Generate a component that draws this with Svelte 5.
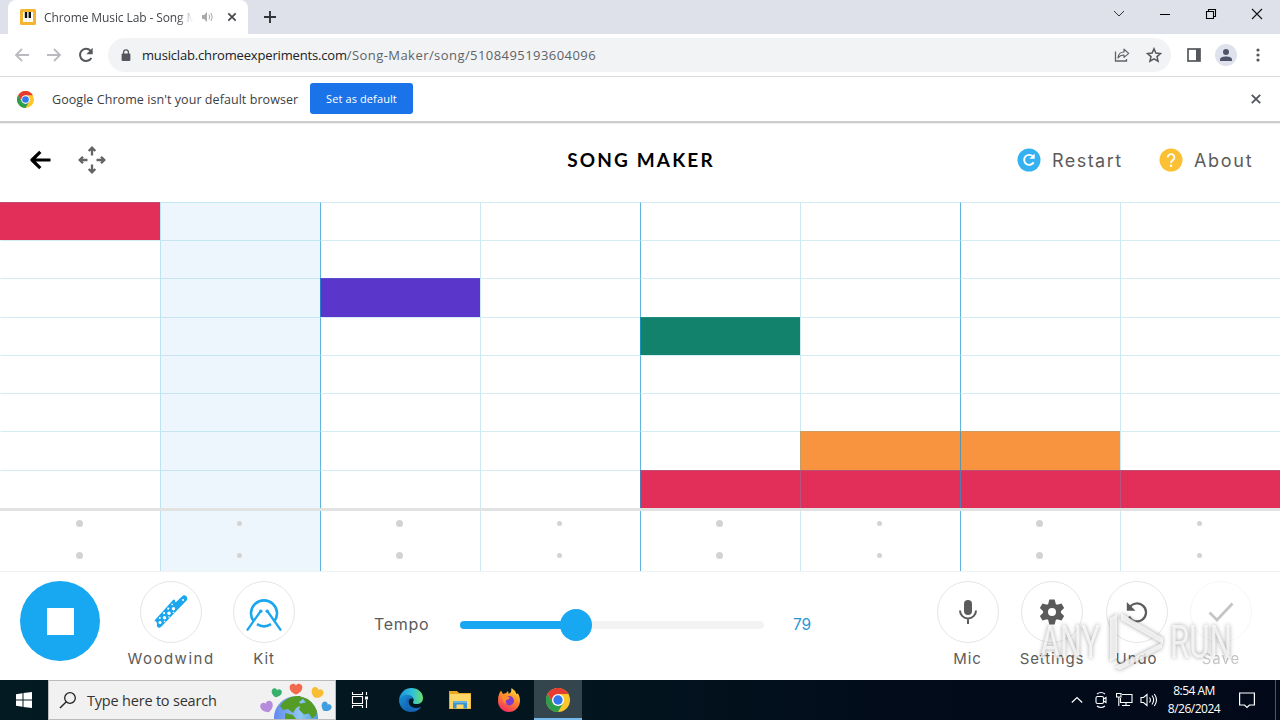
<script>
  const N = null;
  const red = '#e22f59', purple = '#5a37ca', green = '#13826c', orange = '#f8943f';
  const rows = [
    [red, N, N, N, N, N, N, N],
    [N, N, N, N, N, N, N, N],
    [N, N, purple, N, N, N, N, N],
    [N, N, N, N, green, N, N, N],
    [N, N, N, N, N, N, N, N],
    [N, N, N, N, N, N, N, N],
    [N, N, N, N, N, orange, orange, N],
    [N, N, N, N, red, red, red, red]
  ];
  const beats = [0, 1, 2, 3, 4, 5, 6, 7];
  const playing = 1;
</script>

{#snippet chromeLogo(size)}
  <svg width={size} height={size} viewBox="0 0 24 24">
    <circle cx="12" cy="12" r="12" fill="#fbc72d" />
    <path d="M1.6 6A12 12 0 0 1 22.4 6H12L6.8 15z" fill="#e53b30" />
    <path d="M1.6 6 6.8 15 12 18 17.2 15 12 24A12 12 0 0 1 1.6 6z" fill="#2b9d4c" />
    <circle cx="12" cy="12" r="6" fill="#fff" />
    <circle cx="12" cy="12" r="4.7" fill="#3079ed" />
  </svg>
{/snippet}

<div class="screen">
  <header class="tabs">
    <div class="tab">
      <svg width="16" height="16" viewBox="0 0 16 16"><rect width="16" height="16" rx="1.5" fill="#f5b52e" /><rect x="3" y="3" width="10" height="10" fill="#fff" /><path d="M4.800 3h2.400v6H4.800zM8.600 3H11v6H8.600z" fill="#111" /><path d="M6 9v4M9.800 9v4" stroke="#e8e0d0" stroke-width=".6" /></svg>
      <span class="tabtitle">Chrome Music Lab - Song M</span>
      <svg class="sound" width="12" height="12" viewBox="0 0 12 12"><path d="M1 4h2l3-3v10L3 8H1z" fill="#aaa" /><path d="M8 3.5q1.5 2.5 0 5M10 2q2.5 4 0 8" fill="none" stroke="#aaa" /></svg>
      <svg class="tabx" width="10" height="10" viewBox="0 0 10 10"><path d="m1.3 1.3 7.4 7.4m0-7.4L1.3 8.7" stroke="#44474b" stroke-width="1.7" /></svg>
    </div>
    <svg class="plus" width="12" height="12" viewBox="0 0 12 12"><path d="M6 0v12M0 6h12" stroke="#303338" stroke-width="1.9" /></svg>
    <div class="wincontrols">
      <svg width="12" height="12" viewBox="0 0 12 12"><path d="m1 3 5 5 5-5" fill="none" stroke="#333" /></svg>
      <svg width="12" height="12" viewBox="0 0 12 12"><path d="M1 6.5h10" stroke="#000" /></svg>
      <svg width="12" height="12" viewBox="0 0 12 12"><path d="M1.5 3.5h7v7h-7zM3.5 3.5v-2h7v7h-2" fill="none" stroke="#000" stroke-width="1.1" /></svg>
      <svg width="12" height="12" viewBox="0 0 12 12"><path d="m1 1 10 10M11 1 1 11" stroke="#111" stroke-width="1.1" /></svg>
    </div>
  </header>

  <nav class="toolbar">
    <svg width="16" height="16" viewBox="0 0 16 16"><path d="M15 8H2M8 2 2 8l6 6" fill="none" stroke="#b9bbbe" stroke-width="1.8" /></svg>
    <svg width="16" height="16" viewBox="0 0 16 16"><path d="M1 8h13M8 2l6 6-6 6" fill="none" stroke="#b9bbbe" stroke-width="1.8" /></svg>
    <svg width="16" height="16" viewBox="0 0 16 16"><path d="M13.4 11A6.1 6.1 0 1 1 12.5 3.6" fill="none" stroke="#54575c" stroke-width="2" /><path d="M14.7.8v6.4H8.3z" fill="#54575c" /></svg>
    <div class="omni">
      <svg width="10" height="13" viewBox="0 0 10 13"><rect x=".6" y="4.4" width="8.8" height="7.6" rx="1" fill="#54575c" /><path d="M2.6 5V3.2a2.4 2.4 0 0 1 4.8 0V5" fill="none" stroke="#54575c" stroke-width="1.3" /></svg>
      <span class="url"><b>musiclab.chromeexperiments.com</b>/Song-Maker/song/5108495193604096</span>
      <svg class="share" width="16" height="16" viewBox="0 0 16 16"><path d="M1.5 4.500v9.500h11v-2" fill="none" stroke="#5f6368" stroke-width="1.3" /><path d="M4 11c.3-4 2.500-6 6-6V2.200l4.700 4.200-4.700 4V8C7.500 8 5.500 8.800 4 11z" fill="none" stroke="#5f6368" stroke-width="1.2" stroke-linejoin="round" /></svg>
      <svg width="16" height="16" viewBox="0 0 16 16"><path d="m8 1.800 1.850 4.300 4.650.4-3.500 3.100 1.050 4.600L8 11.800l-4.050 2.400L5 9.600 1.500 6.500l4.650-.4z" fill="none" stroke="#54575c" stroke-width="1.5" /></svg>
    </div>
    <svg class="panel" width="14" height="14" viewBox="0 0 14 14"><rect x="1" y="1" width="12" height="12" fill="#fff" stroke="#54575c" stroke-width="1.700" /><path d="M9 1h4v12H9z" fill="#54575c" /></svg>
    <svg class="avatar" width="22" height="22" viewBox="0 0 22 22"><circle cx="11" cy="11" r="11" fill="#dfe1ec" /><circle cx="11" cy="8" r="3" fill="#4f5369" /><path d="M5 17v-1.500C5 13.200 8.500 12.500 11 12.500s6 .7 6 3V17z" fill="#4f5369" /></svg>
    <svg class="kebab" width="4" height="14" viewBox="0 0 4 14" fill="#54575c"><circle cx="2" cy="2" r="1.600" /><circle cx="2" cy="7" r="1.600" /><circle cx="2" cy="12" r="1.600" /></svg>
  </nav>

  <div class="infobar">
    {@render chromeLogo(17)}
    <span class="infotext">Google Chrome isn't your default browser</span>
    <button class="setdefault">Set as default</button>
    <svg class="infox" width="10" height="10" viewBox="0 0 10 10"><path d="m.8.8 8.400 8.400m0-8.400L.8 9.200" stroke="#54575c" stroke-width="1.900" /></svg>
  </div>

  <div class="apphead">
    <div class="left">
      <svg width="22" height="20" viewBox="0 0 22 20"><path d="M20.500 10H2M10.300 1.800 2 10l8.300 8.200" fill="none" stroke="#000" stroke-width="3.200" stroke-linejoin="round" /></svg>
      <svg class="move" width="28" height="28" viewBox="-14 -14 28 28">
        {#each [0, 90, 180, 270] as a}
          <path d="M0-4.500v-7M-3.300-9 0-12.300 3.300-9" transform="rotate({a})" fill="none" stroke="#636363" stroke-width="2.300" />
        {/each}
      </svg>
    </div>
    <h1>SONG MAKER</h1>
    <div class="right">
      <svg width="24" height="24" viewBox="0 0 24 24"><circle cx="12" cy="12" r="11.500" fill="#35b1f2" /><path d="M16.600 14.200a5 5 0 1 1-.6-5.600" fill="none" stroke="#fff" stroke-width="1.900" /><path d="M17.700 5.500v5.300h-5.300z" fill="#fff" /></svg>
      <span class="restart">Restart</span>
      <svg width="24" height="24" viewBox="0 0 24 24"><circle cx="12" cy="12" r="11.500" fill="#fcc034" /><path d="M8.700 9.500a3.300 3.200 0 1 1 5.300 2.400c-1.300 1-2 1.500-2 3" fill="none" stroke="#fff" stroke-width="1.900" /><circle cx="12" cy="17.800" r="1.200" fill="#fff" /></svg>
      <span class="about">About</span>
    </div>
  </div>

  <main class="notes">
    {#each rows as row}
      {#each row as note, c}
        <div class="cell" class:bar={c % 2 === 0 && c > 0} class:first={c === 0} class:play={c === playing} style:background-color={note}></div>
      {/each}
    {/each}
  </main>
  <section class="drums">
    {#each beats as c}
      <div class="beat" class:bar={c % 2 === 0 && c > 0} class:first={c === 0} class:play={c === playing} class:weak={c % 2 === 1}>
        <i></i><i></i>
      </div>
    {/each}
  </section>

  <footer class="controls">
    <div class="stop"><span></span></div>
    <div class="tool wood">
      <div class="ring"><svg width="36" height="36" viewBox="0 0 36 36">
        <path d="M1.500 26.500 20 6l1.800-.5.7 3L29.500 2c2-2 6 1 4.500 4L8 33c-2 2-5 0-4-3l-.5-2z" fill="#1ba6ee" />
        <g fill="#fff"><circle cx="7" cy="28.500" r="1.500" /><circle cx="11.500" cy="23.800" r="1.700" /><circle cx="16" cy="19.200" r="1.700" /><circle cx="20.500" cy="14.700" r="1.700" /><circle cx="6.800" cy="24" r="1" /><circle cx="11" cy="19.200" r="1.100" /><circle cx="15.200" cy="14.600" r="1.100" /><circle cx="19.200" cy="10.300" r=".9" /><circle cx="11.500" cy="27.500" r=".8" /><circle cx="16" cy="23" r=".8" /><circle cx="20.500" cy="18.500" r=".8" /><circle cx="30" cy="6" r="1" /></g>
      </svg></div>
      <span>Woodwind</span>
    </div>
    <div class="tool kit">
      <div class="ring"><svg width="38" height="38" viewBox="0 0 38 38" fill="none" stroke="#1ba6ee">
        <path d="M8.500 26A13 13 0 1 1 29.500 26M12 29.200A13 13 0 0 0 26 29.200" stroke-width="2.600" /><path d="M2 35.500 15 17M36 35.500 23 17" stroke-width="2.200" /><circle cx="15.800" cy="16.200" r="1.300" fill="#1ba6ee" /><circle cx="22.200" cy="16.200" r="1.300" fill="#1ba6ee" />
      </svg></div>
      <span>Kit</span>
    </div>
    <span class="tempo">Tempo</span>
    <div class="slider"><div class="fill"></div><div class="thumb"></div></div>
    <span class="bpm">79</span>
    <div class="actions">
      <div class="tool">
        <div class="ring"><svg width="20" height="26" viewBox="0 0 20 26"><rect x="6" y="1" width="8" height="15" rx="4" fill="#5b5b5b" /><path d="M2 11.500a8 8 0 0 0 16 0M10 19.500V25" fill="none" stroke="#5b5b5b" stroke-width="2" /></svg></div>
        <span>Mic</span>
      </div>
      <div class="tool">
        <div class="ring"><svg width="26" height="26" viewBox="-13 -13 26 26"><g fill="#5b5b5b">{#each [0, 60, 120, 180, 240, 300] as a}<path d="M-4-7-2.700-12.500H2.700L4-7z" transform="rotate({a})" />{/each}</g><circle r="6.500" fill="none" stroke="#5b5b5b" stroke-width="5" /></svg></div>
        <span>Settings</span>
      </div>
      <div class="tool">
        <div class="ring"><svg width="22" height="22" viewBox="0 0 22 22"><path d="M3.500 6.500A9 9 0 1 1 3 15.500" fill="none" stroke="#5b5b5b" stroke-width="2.200" /><path d="M.8 1v8.700h8.700z" fill="#5b5b5b" /></svg></div>
        <span>Undo</span>
      </div>
      <div class="tool save">
        <div class="ring"><svg width="26" height="20" viewBox="0 0 26 20"><path d="m1.500 10.500 7.500 7.500L24.500 1.500" fill="none" stroke="#5b5b5b" stroke-width="2.800" /></svg></div>
        <span>Save</span>
      </div>
    </div>
    <svg class="mark" width="204" height="72" viewBox="0 0 204 72">
      <g fill="#fff" fill-opacity=".75">
        <text x="6" y="48" textLength="60" lengthAdjust="spacingAndGlyphs">ANY</text>
        <text x="136" y="48" textLength="62" lengthAdjust="spacingAndGlyphs">RUN</text>
        <path d="M76 52V8l7-4v44zM87 3l42 25v6L87 10zM80 57l48-24v5L86 60z" />
      </g>
    </svg>
  </footer>

  <div class="taskbar">
    <div class="start"><svg width="16" height="16" viewBox="0 0 16 16" fill="#fff"><path d="M0 2.200 6.500 1.300v6.200H0zM7.500 1.100 16 0v7.500H7.500zM0 8.500h6.500v6.200L0 13.800zM7.500 8.500H16V16l-8.500-1.100z" /></svg></div>
    <div class="search">
      <svg class="lens" width="18" height="18" viewBox="0 0 18 18"><circle cx="11" cy="7" r="5.300" fill="none" stroke="#222" stroke-width="1.300" /><path d="M7.300 10.800 1 17" stroke="#222" stroke-width="1.400" /></svg>
      <span>Type here to search</span>
      <svg class="earth" width="76" height="38" viewBox="0 0 76 38">
        <defs>
          <linearGradient id="sea"><stop offset="0" stop-color="#6289ef" /><stop offset=".6" stop-color="#8fc7f3" /><stop offset="1" stop-color="#4a9de2" /></linearGradient>
          <path id="heart" d="M0 5.500C-3 4.500-7 1.500-6.300-2.500-5.500-6-1-6 0-3.500 1-6 5.500-6 6.300-2.500 7 1.500 3 4.500 0 5.500z" />
        </defs>
        <circle cx="37" cy="37" r="22" fill="url(#sea)" />
        <path d="M24 21q7-7 17-6l3 3-4 3 3 3-6 3-3 5-5-4-5 1-3-4zM42 15.500q12 3 16 15l-1 4-4 3-3-5-5 1-5-5 2-6 5-1zM26 32l8 2 3 4H26z" fill="#559c27" />
        <use href="#heart" transform="translate(37 8)" fill="#f26a4e" />
        <use href="#heart" transform="translate(17.500 12) rotate(12) scale(.8)" fill="#36b06a" />
        <use href="#heart" transform="translate(58 12) rotate(25) scale(.96)" fill="#f7bd33" />
        <use href="#heart" transform="translate(8 26) rotate(-20)" fill="#b58bdc" />
        <use href="#heart" transform="translate(67 26) rotate(35) scale(.82)" fill="#3f9ee0" />
      </svg>
    </div>
    <div class="task"><svg width="18" height="18" viewBox="0 0 18 18" fill="none" stroke="#fff" stroke-width="1.100"><path d="M1.500 1v2.500h10V1M1.500 17v-2.500h10V17M1.500 5.500h10v7h-10zM15.500 1v3M15.500 9v8" /><path d="M14 5.500h3v3h-3z" fill="#fff" stroke="none" /></svg></div>
    <div class="task edge"><svg width="24" height="24" viewBox="0 0 24 24">
      <defs><linearGradient id="edgeA" x2="1"><stop offset="0" stop-color="#1d93dc" /><stop offset=".55" stop-color="#30c0d8" /><stop offset="1" stop-color="#6be06a" /></linearGradient><linearGradient id="edgeB" y2="1"><stop offset="0" stop-color="#1a8fd8" /><stop offset="1" stop-color="#0b4f9c" /></linearGradient></defs>
      <path d="M0 12C1 4.500 6 0 12.500 0 19 0 24 4.500 24 10c0 4-3 6-6.500 6-2.500 0-4-.8-3.500-1.800C16 11 13.500 8 9.500 8 5 8 1.500 10 0 12z" fill="url(#edgeA)" />
      <path d="M0 12C1.500 8.500 5 6.500 9 6.800c3 .2 5 2 5 4-3.500-1.300-6 2-4.500 5.700 2 4.500 8 5 12.500 2.500C19.500 22.500 16 24 12 24 5 24 0 18.500 0 12z" fill="url(#edgeB)" />
      <path d="M9 9.500C6 12 6 18 9.500 21c2 1.800 5 2.600 7.500 2 2-.8 4-2.300 5-4-4.500 2-10.500 1-12-3.500-.8-2.500 0-4 1.500-5z" fill="#1668b8" />
    </svg></div>
    <div class="task"><svg width="22" height="20" viewBox="0 0 22 20"><path d="M0 1h8l2 2h12v16H0z" fill="#e9a824" /><path d="M1 4h20.500v14.500H1z" fill="#fcd767" /><path d="M4 18.500V11h14v7.500h-3.500V14.500h-7v4z" fill="#3b92d0" /><path d="M4 11h14v2H4z" fill="#69b3df" /></svg></div>
    <div class="task fire"><svg width="24" height="24" viewBox="0 0 24 24">
      <defs><linearGradient id="fox" x1=".8" y1="0" x2=".3" y2="1"><stop offset="0" stop-color="#ffe13d" /><stop offset=".45" stop-color="#ff8a2b" /><stop offset="1" stop-color="#f22c62" /></linearGradient></defs>
      <path d="M2.500 5 4 2.500 6 6q1-.8 3-.8L11 3l.7 3L14 4l.5-4q4 2.500 5 6l1.500-.5c2 3.500 2.500 7 1.500 10.500C21 20.500 17 24 12 24 5.500 24 1 19 1 13q0-5 1.500-8z" fill="url(#fox)" /><circle cx="12.300" cy="12.700" r="4.700" fill="#7f3ccc" /><path d="M5 8q4-2 6 .5l2 1.500q-2 2-4 2.200-1 2.300 1 3.800-5-1-5-8z" fill="#ff8a2b" />
    </svg></div>
    <div class="task active">{@render chromeLogo(24)}</div>
    <div class="tray">
      <svg width="12" height="12" viewBox="0 0 12 12"><path d="m.8 8.500 5.200-5 5.200 5" fill="none" stroke="#fff" stroke-width="1.200" /></svg>
      <svg class="meet" width="12" height="18" viewBox="0 0 12 18" fill="none" stroke="#fff" stroke-width="1.100"><rect x="1" y="5.500" width="7.500" height="7" rx="1.500" /><path d="m8.500 8 2.500-1.500v5L8.500 10M2 3q4-3 8 0M2 15q4 3 8 0" /></svg>
      <svg width="17" height="16" viewBox="0 0 17 16" fill="none" stroke="#fff" stroke-width="1.100"><path d="M6 2.500h10v8H4.500V6M10 10.500v3M6 13.500h8M.5 1.500H5V5H.5zM2.800 5v9" /></svg>
      <svg class="vol" width="18" height="16" viewBox="0 0 18 16" fill="none" stroke="#fff" stroke-width="1.100"><path d="M1 5.500h2.500L7 2.500v11l-3.500-3H1zM9.500 5.500q1.800 2.500 0 5M12 3.500q3.300 4.500 0 9M14.300 2q4.400 6 0 12" /></svg>
      <div class="clock"><span>8:54 AM</span><span>8/26/2024</span></div>
      <svg class="note" width="16" height="17" viewBox="0 0 16 17"><path d="M.6 1h14.800v12H10.500L8 15.500 5.500 13H.6z" fill="none" stroke="#fff" stroke-width="1.200" /></svg>
      <div class="peek"></div>
    </div>
  </div>
</div>

<style>
  :global(body) { margin: 0; overflow: hidden; }
  * { box-sizing: border-box; }
  svg { display: block; flex: none; }
  .screen { width: 1280px; height: 720px; display: flex; flex-direction: column; background: #fff; font-family: "Open Sans", "Noto Sans", sans-serif; }
  .tabs { height: 34px; flex: none; background: #dee1e9; display: flex; align-items: center; padding-left: 8px; }
  .tab { width: 240px; height: 34px; background: #fff; border-radius: 8px 8px 0 0; display: flex; align-items: center; padding-left: 12px; }
  .tabtitle { width: 149px; margin-left: 8px; font-size: 12px; letter-spacing: -.1px; color: #43464b; white-space: nowrap; overflow: hidden; mask-image: linear-gradient(90deg, #000 90%, transparent); }
  .sound { margin-left: 8px; }
  .tabx { margin-left: 14px; }
  .plus { margin-left: 16px; }
  .wincontrols { margin-left: auto; display: flex; gap: 34px; padding: 0 17px 6px 0; }
  .toolbar { height: 43px; flex: none; border-bottom: 1px solid #d9dbde; display: flex; align-items: center; padding-left: 14px; gap: 16px; }
  .omni { width: 1063px; height: 34px; margin-left: -2px; background: #f1f3f4; border-radius: 17px; display: flex; align-items: center; padding: 0 9px 0 13px; }
  .url { margin-left: 11px; font-size: 13px; letter-spacing: .44px; color: #5f6368; white-space: nowrap; }
  .url b { font-weight: 400; letter-spacing: -.17px; color: #202124; }
  .share { margin: 0 16px 0 auto; }
  .avatar { margin-left: -2px; }
  .kebab { margin-left: 3px; }
  .infobar { height: 44px; flex: none; display: flex; align-items: center; padding: 0 19px 0 17px; }
  .infotext { width: 247px; margin-left: 18px; font-size: 12.500px; letter-spacing: .06px; color: #3c4043; white-space: nowrap; }
  .setdefault { width: 103px; height: 31px; margin: 0 0 1px 11px; border: 0; border-radius: 3px; background: #1a73e8; color: #fff; font: 11px "Open Sans", sans-serif; letter-spacing: .1px; padding: 0 0 1px; }
  .infox { margin-left: auto; }
  .apphead { height: 81px; flex: none; border-top: 2px solid #ccc; box-shadow: inset 0 1px 0 #eee; display: grid; grid-template-columns: 1fr auto 1fr; align-items: center; padding: 0 27px 5px 30px; font-family: Inter, sans-serif; }
  .left { display: flex; align-items: center; gap: 26px; }
  .move { margin-bottom: 1px; }
  h1 { margin: 0 1px 0 0; font: 700 19px/24px Lato, sans-serif; letter-spacing: 2.150px; color: #000; }
  .right { display: flex; align-items: center; justify-content: flex-end; color: #5b5b5b; font-size: 18px; letter-spacing: 1.450px; }
  .restart { width: 71px; margin: 0 36px 0 11px; }
  .about { width: 59px; margin-left: 11px; letter-spacing: 1.700px; }
  .notes { height: 306px; flex: none; display: grid; grid-template-columns: repeat(8, 160px); grid-template-rows: 38px 38px 39px 38px 38px 38px 39px 38px; }
  .cell { border-top: 1px solid rgba(70, 180, 210, .24); border-left: 1px solid rgba(70, 180, 210, .28); }
  .drums { height: 63px; flex: none; display: grid; grid-template-columns: repeat(8, 160px); border-top: 3px solid #e1e3e3; }
  .beat { border-left: 1px solid rgba(70, 180, 210, .28); display: flex; flex-direction: column; align-items: center; justify-content: space-between; padding: 9px 2px 12px 0; }
  .bar { border-left-color: rgba(30, 150, 210, .7); }
  .first { border-left-color: transparent; }
  .play { background-color: #ecf6fc; }
  i { width: 7px; height: 7px; border-radius: 50%; background: #d3d3d3; }
  .weak i { width: 5px; height: 5px; margin: 1px; }
  .controls { height: 109px; flex: none; position: relative; border-top: 1px solid #edf3f5; display: flex; padding: 9px 28px 0 20px; font-family: Inter, sans-serif; color: #5b5b5b; }
  .stop { width: 80px; height: 80px; border-radius: 50%; background: #18a7f1; display: grid; place-items: center; }
  .stop span { width: 27px; height: 27px; background: #fff; }
  .tool { width: 62px; display: flex; flex-direction: column; align-items: center; font-size: 15px; letter-spacing: .9px; }
  .tool span { margin-top: 6px; line-height: 19px; white-space: nowrap; }
  .ring { width: 62px; height: 62px; border: 1px solid #e6e6e6; border-radius: 50%; display: grid; place-items: center; }
  .wood { margin-left: 40px; }
  .wood span { letter-spacing: 1.500px; }
  .kit { margin-left: 31px; }
  .kit svg { margin-top: 3px; }
  .tempo { width: 66px; margin: 33px 0 0 79px; font-size: 16px; line-height: 20px; letter-spacing: .7px; }
  .slider { width: 304px; height: 8px; margin: 40px 0 0 20px; border-radius: 4px; background: #f3f3f3; display: flex; align-items: center; }
  .fill { width: 116px; height: 8px; border-radius: 4px; background: #18a7f1; }
  .thumb { width: 32px; height: 32px; margin-left: -16px; flex: none; border-radius: 50%; background: #18a7f1; }
  .bpm { margin: 34px 0 0 29px; font-size: 15.500px; line-height: 20px; color: #2998d2; }
  .actions { margin-left: auto; display: flex; gap: 22.500px; }
  .save { opacity: .35; }
  .mark { position: absolute; left: 1034px; top: 38px; filter: drop-shadow(0 0 2px rgba(80, 80, 80, .7)); font: 47px Roboto, sans-serif; }
  .taskbar { height: 40px; flex: none; display: flex; background: linear-gradient(90deg, #031a22, #03151f 45%, #020c1a 70%, #020a1a); color: #fff; }
  .start { width: 48px; display: grid; place-items: center; }
  .search { width: 288px; background: #f1f1f1; border: 1px solid #bbb; display: flex; align-items: center; padding-left: 10px; color: #333; font-size: 14.500px; }
  .search span { width: 130px; margin-left: 10px; white-space: nowrap; letter-spacing: -.2px; }
  .earth { margin-left: auto; }
  .task { width: 49px; display: grid; place-items: center; padding-right: 1px; }
  .edge { width: 51px; padding: 0; }
  .edge + .task { width: 47px; padding: 0; }
  .task.fire { width: 51px; padding: 0; }
  .task.active { width: 48px; background: #34454e; border-bottom: 2px solid #76b9ed; padding: 2px 0 0; }
  .tray { margin-left: auto; display: flex; align-items: center; gap: 9px; }
  .meet { margin-left: 3px; }
  .vol { margin-left: -2px; }
  .clock { width: 56px; margin-left: -1px; display: flex; flex-direction: column; align-items: center; font-size: 12px; line-height: 18px; letter-spacing: -.5px; white-space: nowrap; }
  .note { margin-left: 8px; }
  .peek { width: 1px; height: 40px; margin: 0 4px 0 11px; background: #4c5562; }
</style>
